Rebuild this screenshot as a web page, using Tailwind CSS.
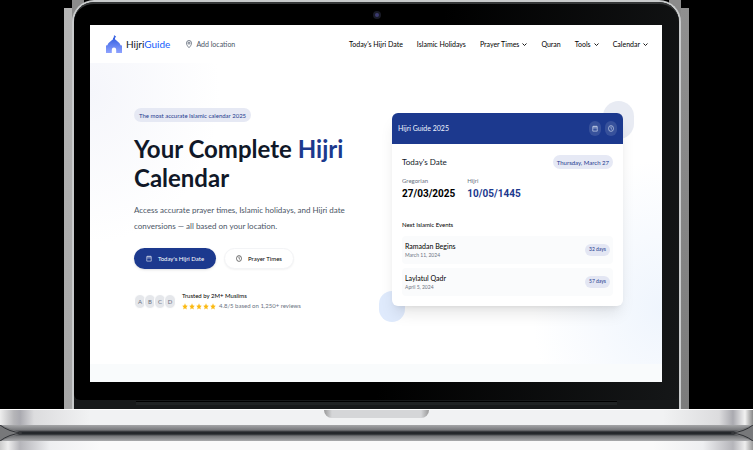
<!DOCTYPE html>
<html lang="en">
<head>
<meta charset="utf-8">
<meta name="viewport" content="width=device-width, initial-scale=1">
<title>Hijri Guide</title>
<script src="https://cdn.jsdelivr.net/npm/@tailwindcss/browser@4"></script>
</head>
<body class="bg-black font-[Lato,'Open_Sans',sans-serif] text-gray-900">
<svg class="hidden" aria-hidden="true">
  <symbol id="calendar" viewBox="0 0 24 24" preserveAspectRatio="none"><path d="M3 5h18v16H3zM3 10h18M8 2v5M16 2v5" fill="none" stroke="currentColor" stroke-width="2"/></symbol>
  <symbol id="clock" viewBox="0 0 24 24" preserveAspectRatio="none"><circle cx="12" cy="12" r="10" fill="none" stroke="currentColor" stroke-width="2"/><path d="M12 5.500v6.500l4 3" fill="none" stroke="currentColor" stroke-width="2"/></symbol>
  <symbol id="chevron" viewBox="0 0 10 10"><path d="M1 3l4 4 4-4" fill="none" stroke="currentColor" stroke-width="1.800"/></symbol>
  <symbol id="star" viewBox="0 0 24 24" preserveAspectRatio="none"><path d="M12 1l3.300 7.200 7.700.8-5.700 5.300 1.600 7.900L12 18.300l-6.900 3.900 1.600-7.900L1 9l7.700-.8z" fill="#fbb910"/></symbol>
</svg>

<div class="flex min-h-screen flex-col overflow-hidden">
  <!-- Laptop lid -->
  <div class="mx-16 flex">
    <div class="mt-2 w-2 bg-linear-to-b from-[#b5b5b5] to-[#a6a6a6]"></div>
    <div class="min-w-0 flex-1 bg-[linear-gradient(to_right,#8b8b8b_12px,#000_12px,#000_calc(100%-12px),#8b8b8b_calc(100%-12px))]">
      <div class="rounded-t-[22px] border-x-2 border-t-2 border-[#c9cbcc] bg-[#17191a]">
        <div class="rounded-t-[20px] rounded-b-md border-t-2 border-[#343637] bg-[linear-gradient(100deg,#000_55%,#151718_100%)]">
          <div class="flex h-[21px] items-center justify-center">
            <span class="size-2 rounded-full border-2 border-[#191b26] bg-[#3c3b70]"></span>
          </div>
          <!-- Screen -->
          <div class="mr-[17px] ml-4 bg-white">
            <header class="flex h-[38px] items-center pr-[14px] pl-4">
              <a href="#" class="flex items-center gap-1 text-[10px] leading-4">
                <svg class="h-[18px] w-4" viewBox="0 0 16 18" preserveAspectRatio="none" aria-hidden="true">
                  <defs><linearGradient id="dome" x1="0" y1="0" x2="0" y2="1"><stop offset="0" stop-color="#2453dc"/><stop offset="1" stop-color="#8fa3ff"/></linearGradient></defs>
                  <path fill="url(#dome)" d="M8.800 0c-1.200.6-1.300 1.500-.5 2-.3.500-.7.700-1.300.6v1.600C6 5.500 2 7.300 1.500 10.200H.8q-.8 0-.8.800v7h5.800v-3.300a2.200 2.200 0 0 1 4.400 0V18H16v-7q0-.8-.8-.8h-.7C14 7.300 10 5.500 9 4.200V2.700c1.200-.4 1.300-1.300.8-1.900-.2.500-.5.700-.8.600-.4-.3-.5-.8-.2-1.400z"/>
                </svg>
                <span>Hijri<span class="text-blue-600">Guide</span></span>
              </a>
              <button type="button" class="ml-4 flex items-center gap-1 text-[7px] leading-3 text-gray-600">
                <svg class="h-2 w-[6px]" viewBox="0 0 18 24" preserveAspectRatio="none" aria-hidden="true"><path d="M9 23C5 19 1.500 14 1.500 9.500a7.500 8 0 0 1 15 0C16.500 14 13 19 9 23z" fill="none" stroke="currentColor" stroke-width="2.200"/><circle cx="9" cy="9.500" r="3" fill="none" stroke="currentColor" stroke-width="2.200"/></svg>
                Add location
              </button>
              <nav class="ml-auto flex items-center gap-[14px] text-[7px] leading-3 text-black">
                <a href="#">Today's Hijri Date</a>
                <a href="#">Islamic Holidays</a>
                <a href="#" class="flex items-center gap-[3px]">Prayer Times <svg class="size-[5px]"><use href="#chevron"/></svg></a>
                <a href="#">Quran</a>
                <a href="#" class="flex items-center gap-[3px]">Tools <svg class="size-[5px]"><use href="#chevron"/></svg></a>
                <a href="#" class="flex items-center gap-[3px]">Calendar <svg class="size-[5px]"><use href="#chevron"/></svg></a>
              </nav>
            </header>

            <main class="flex items-start justify-between bg-[radial-gradient(ellipse_130px_150px_at_0%_10%,#f5f6fb,transparent),radial-gradient(ellipse_130px_150px_at_100%_82%,#eff5fd,transparent)] pt-[45px] pr-[39px] pb-[53px] pl-11">
              <section class="w-[230px]">
                <span class="flex h-[14px] w-fit items-center rounded-full bg-[#e6e9f4] px-[5px] text-[6px] text-blue-900">The most accurate Islamic calendar 2025</span>
                <h1 class="mt-3 text-[24px] leading-[29px] font-bold text-gray-900">Your Complete <span class="text-blue-900">Hijri</span><br>Calendar</h1>
                <p class="mt-[10px] text-[8px] leading-4 text-gray-600">Access accurate prayer times, Islamic holidays, and Hijri date conversions — all based on your location.</p>
                <div class="mt-[14px] flex gap-2 text-[6px] leading-3">
                  <button type="button" class="flex h-[21px] w-[82px] items-center justify-center gap-[6px] rounded-full bg-blue-900 text-white shadow-sm"><svg class="h-[7px] w-[6px]"><use href="#calendar"/></svg>Today's Hijri Date</button>
                  <button type="button" class="flex h-[21px] w-[70px] items-center justify-center gap-[6px] rounded-full border border-gray-100 bg-white text-black shadow-xs"><svg class="h-[7px] w-[6px]"><use href="#clock"/></svg>Prayer Times</button>
                </div>
                <div class="mt-[22px] flex items-center gap-[6px]">
                  <div class="flex -space-x-[2px] text-[6px] text-gray-500">
                    <span class="flex h-[15px] w-3 items-center justify-center rounded-full border border-white bg-gray-200">A</span>
                    <span class="flex h-[15px] w-3 items-center justify-center rounded-full border border-white bg-gray-200">B</span>
                    <span class="flex h-[15px] w-3 items-center justify-center rounded-full border border-white bg-gray-200">C</span>
                    <span class="flex h-[15px] w-3 items-center justify-center rounded-full border border-white bg-gray-200">D</span>
                  </div>
                  <div class="text-[6px] leading-[10px]">
                    <p class="text-black">Trusted by 2M+ Muslims</p>
                    <div class="flex items-center gap-px text-gray-500">
                      <svg class="h-[7px] w-[6px]"><use href="#star"/></svg><svg class="h-[7px] w-[6px]"><use href="#star"/></svg><svg class="h-[7px] w-[6px]"><use href="#star"/></svg><svg class="h-[7px] w-[6px]"><use href="#star"/></svg><svg class="h-[7px] w-[6px]"><use href="#star"/></svg>
                      <span class="pl-[2px]">4.8/5 based on 1,250+ reviews</span>
                    </div>
                  </div>
                </div>
              </section>

              <section class="relative mt-[5px] w-[231px]">
                <span class="absolute -top-3 -right-[11px] h-[38px] w-[31px] rounded-full bg-[#e8ebf3]"></span>
                <span class="absolute -bottom-4 -left-[13px] h-[31px] w-[26px] rounded-full bg-[#dfeafc]"></span>
                <div class="relative overflow-hidden rounded-md bg-white shadow-lg">
                  <div class="flex h-[31px] items-center justify-between bg-blue-900 px-[6px] text-[7px] text-blue-50">
                    <span>Hijri Guide 2025</span>
                    <div class="flex gap-1">
                      <button type="button" aria-label="Calendar" class="flex h-[15px] w-3 items-center justify-center rounded-full bg-white/12"><svg class="h-[7px] w-[6px]"><use href="#calendar"/></svg></button>
                      <button type="button" aria-label="Time" class="flex h-[15px] w-3 items-center justify-center rounded-full bg-white/12"><svg class="h-[7px] w-[6px]"><use href="#clock"/></svg></button>
                    </div>
                  </div>
                  <div class="px-[10px] pt-[11px] pb-[10px]">
                    <div class="flex items-center justify-between">
                      <h2 class="text-[8px] leading-[14px]">Today's Date</h2>
                      <span class="flex h-[14px] items-center rounded-full bg-[#e6e9f5] px-[4px] text-[6px] text-blue-900">Thursday, March 27</span>
                    </div>
                    <dl class="mt-[7px] flex gap-3">
                      <div><dt class="text-[6px] leading-[10px] text-gray-500">Gregorian</dt><dd class="font-[Roboto,sans-serif] text-[10px] leading-4 font-bold text-black">27/03/2025</dd></div>
                      <div><dt class="text-[6px] leading-[10px] text-gray-500">Hijri</dt><dd class="font-[Roboto,sans-serif] text-[10px] leading-4 font-bold text-blue-900">10/05/1445</dd></div>
                    </dl>
                    <h3 class="mt-[18px] text-[6px] leading-[10px] text-black">Next Islamic Events</h3>
                    <ul class="mt-[6px] space-y-1">
                      <li class="flex h-7 items-center justify-between rounded bg-[#fafbfc] px-[3px]">
                        <div><p class="text-[7px] leading-[10px] text-black">Ramadan Begins</p><p class="text-[5px] leading-2 text-gray-500">March 11, 2024</p></div>
                        <span class="flex h-3 items-center rounded-full bg-[#e3e6f3] px-1 text-[5px] text-blue-900">32 days</span>
                      </li>
                      <li class="flex h-7 items-center justify-between rounded bg-[#fafbfc] px-[3px]">
                        <div><p class="text-[7px] leading-[10px] text-black">Laylatul Qadr</p><p class="text-[5px] leading-2 text-gray-500">April 5, 2024</p></div>
                        <span class="flex h-3 items-center rounded-full bg-[#e3e6f3] px-1 text-[5px] text-blue-900">57 days</span>
                      </li>
                    </ul>
                  </div>
                </div>
              </section>
            </main>
            <div class="h-[18px] bg-[#f9fbfc]"></div>
          </div>
          <div class="h-[18px]"></div>
        </div>
        <div class="mx-[62px] mt-px h-1 border-t border-black bg-[#202324]"></div>
        <div class="h-1"></div>
      </div>
    </div>
    <div class="mt-2 w-2 bg-linear-to-b from-[#909090] to-[#7c7c7c]"></div>
  </div>

  <!-- Laptop base -->
  <div class="flex flex-1 flex-col">
    <div class="flex h-4 justify-center border-t border-white bg-[linear-gradient(to_right,#eee,#b5b5b8_14px,#aaaab0_20px,#dcdcde_34px,#f1f2f3_90px,#f1f2f3_calc(100%-90px),#dcdcde_calc(100%-34px),#aaaab0_calc(100%-20px),#f2f2f2_calc(100%-8px),#888)]">
      <div class="h-2 w-[105px] rounded-b-lg bg-[linear-gradient(to_right,#999,#d5d6d8_8px,#d5d6d8_calc(100%-8px),#999)]"></div>
    </div>
    <div class="relative h-4 bg-[linear-gradient(to_bottom,#a5a6a8,#77787b_5px,#24272b_7px,#24272b_9px,#737477_11px,#aaabad)]">
      <svg class="absolute top-0 left-0 h-4 w-6" viewBox="0 0 24 16" aria-hidden="true"><path d="M0 0L22 8 0 16z" fill="#77787a"/><path d="M0 0Q9 7 22 8 9 9 0 16" fill="none" stroke="#303236"/></svg>
      <svg class="absolute top-0 right-0 h-4 w-6 -scale-x-100" viewBox="0 0 24 16" aria-hidden="true"><path d="M0 0L22 8 0 16z" fill="#77787a"/><path d="M0 0Q9 7 22 8 9 9 0 16" fill="none" stroke="#303236"/></svg>
    </div>
    <div class="flex-1 bg-[linear-gradient(to_right,#ccc,#eee_8px,#b5b5ba_20px,#eeeff1_50px,#fafafa_100px,#fafafa_calc(100%-100px),#eeeff1_calc(100%-50px),#b5b5ba_calc(100%-20px),#eee_calc(100%-8px),#999)]"></div>
  </div>
</div>
</body>
</html>
